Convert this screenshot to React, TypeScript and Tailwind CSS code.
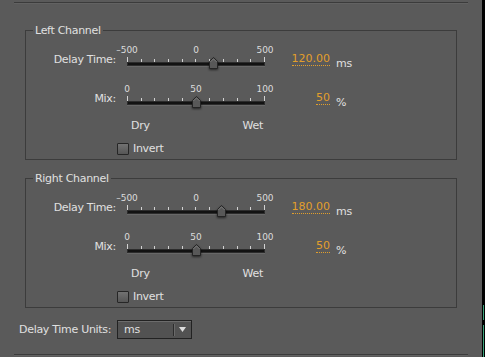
import React from 'react';

const LABEL = "text-[11px] leading-[14px] tracking-[-0.3px] text-[#e0e0e0]";
const VALUE = "text-[11px] leading-[13px] text-[#e29f2b] border-b border-dotted border-[#e29f2b]";

function Slider({ min, max, value, labels }: { min: number; max: number; value: number; labels: string[] }) {
  const pct = (value - min) / (max - min);
  return (
    <div className="w-[168px] -ml-[4px] flex flex-col">
      <div className="flex justify-between h-[12px] text-[9px] leading-[12px] text-[#dcdcdc]">
        {labels.map(l => (
          <span key={l} className="w-[30px] text-center">{l}</span>
        ))}
      </div>
      <div className="mx-[15px] h-[6px] flex justify-between items-end">
        {Array.from({ length: 11 }).map((_, i) => (
          <div key={i} className={`w-[1px] bg-[#d2d2d2] ${i === 0 || i === 10 ? 'h-[5px]' : 'h-[3px]'}`} />
        ))}
      </div>
      <div className="relative mx-[15px] h-[4px] bg-[#121212] shadow-[inset_0_0_0_1px_#2c2c2c,0_1px_0_#686868]">
        <svg
          width="9"
          height="12"
          viewBox="0 0 9 12"
          className="absolute top-[-5px] drop-shadow-[0_1px_1px_rgba(0,0,0,0.6)]"
          style={{ left: pct * 138 - 4 }}
        >
          <path d="M0.5 11.5 V4.5 L4.5 0.5 L8.5 4.5 V11.5 Z" fill="#585858" stroke="#242424" />
          <path d="M1.5 4.9 L4.5 1.9 L7.5 4.9" fill="none" stroke="#7a7a7a" />
        </svg>
      </div>
    </div>
  );
}

function Channel({ title, delay }: { title: string; delay: number }) {
  return (
    <fieldset className="mx-[11px] border border-[#3c3c3c] px-0 pb-[4px]">
      <legend className="ml-[7px] px-[2px] text-[11px] leading-[13px] tracking-[-0.3px] text-[#e0e0e0]">{title}</legend>

      <div className="flex items-start mt-[7.5px]">
        <div className={`w-[90px] text-right mt-[9px] ${LABEL}`}>Delay Time:</div>
        <Slider min={-500} max={500} value={delay} labels={['–500', '0', '500']} />
        <div className="w-[50px] flex justify-end mt-[8px]">
          <span className={VALUE}>{delay.toFixed(2)}</span>
        </div>
        <span className={`ml-[6px] mt-[13px] ${LABEL}`}>ms</span>
      </div>

      <div className="flex items-start mt-[12px]">
        <div className={`w-[90px] text-right mt-[9px] ${LABEL}`}>Mix:</div>
        <Slider min={0} max={100} value={50} labels={['0', '50', '100']} />
        <div className="w-[50px] flex justify-end mt-[8px]">
          <span className={VALUE}>50</span>
        </div>
        <span className={`ml-[6px] mt-[13px] ${LABEL}`}>%</span>
      </div>

      <div className={`flex justify-between w-[132px] ml-[105px] mt-[9px] ${LABEL}`}>
        <span>Dry</span>
        <span>Wet</span>
      </div>

      <div className="flex items-center h-[12px] ml-[91px] mt-[10px]">
        <div className="w-[12px] h-[12px] rounded-[1px] border border-[#262626] bg-gradient-to-b from-[#727272] to-[#565656]" />
        <span className={`ml-[4px] ${LABEL}`}>Invert</span>
      </div>
    </fieldset>
  );
}

export default function App() {
  return (
    <div className="w-[485px] h-[357px] flex bg-[#5a5a5a] font-['DejaVu_Sans',sans-serif] overflow-hidden">
      <div className="w-[482px] px-[14px] pt-[2px] flex flex-col">
        <div className="h-[1px] bg-[#3b3b3b]" />
        <div className="h-[1px] bg-[#626262]" />

        <div className="mt-[19.5px]">
          <Channel title="Left Channel" delay={120} />
        </div>
        <div className="mt-[11.5px]">
          <Channel title="Right Channel" delay={180} />
        </div>

        <div className="flex items-center mt-[12px] h-[19px]">
          <span className={`w-[103px] pl-[5px] ${LABEL}`}>Delay Time Units:</span>
          <div className="w-[75px] h-[19px] flex items-center border border-[#222] bg-[#525252] shadow-[inset_0_1px_0_#6c6c6c]">
            <span className={`flex-1 pl-[6px] ${LABEL}`}>ms</span>
            <div className="w-[1px] h-[12px] bg-[#2c2c2c] shadow-[1px_0_0_#6a6a6a]" />
            <div className="w-[17px] flex justify-center">
              <svg width="7" height="5" viewBox="0 0 7 5">
                <path d="M0 0 H7 L3.5 5 Z" fill="#dcdcdc" />
              </svg>
            </div>
          </div>
        </div>

        <div className="mt-[15px] h-[1px] bg-[#3b3b3b]" />
        <div className="h-[1px] bg-[#626262]" />
      </div>
      <div className="w-[3px] bg-black flex flex-col items-center pt-[305px]">
        <div className="w-[1px] h-[15px] bg-[#3aa27a]" />
        <div className="w-[1px] h-[32px] mt-[5px] bg-[#3aa27a]" />
      </div>
    </div>
  );
}
